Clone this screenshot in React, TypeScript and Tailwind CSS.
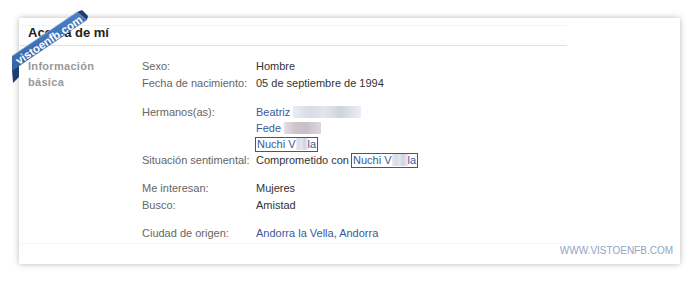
const font = { fontFamily: '"Liberation Sans", Arial, sans-serif' };

function Blur({ w, tone = "gray" }: { w: number; tone?: "gray" | "pink" }) {
  const bg =
    tone === "pink"
      ? "linear-gradient(90deg,#e4e0e6 0%,#cfc4cc 30%,#c9bfc8 60%,#ddd6dc 100%)"
      : "linear-gradient(90deg,#e9ebf1 0%,#d9dce5 25%,#e4e6ed 45%,#d0d4df 70%,#eceef3 100%)";
  return (
    <span
      className="inline-block h-[12px] align-[-2px]"
      style={{ width: w, background: bg }}
    />
  );
}

function Boxed({ children }: { children: React.ReactNode }) {
  return (
    <span className="inline-block -ml-px border border-solid border-[color:#cc1f33] px-px leading-[13px]">
      {children}
    </span>
  );
}

function Row({
  label,
  children,
  lh = "leading-[17px]",
}: {
  label: string;
  children: React.ReactNode;
  lh?: string;
}) {
  return (
    <div className={`flex ${lh}`}>
      <div className="w-[114px] shrink-0 text-[#666]">{label}</div>
      <div className="text-[#333]">{children}</div>
    </div>
  );
}

function Ribbon() {
  return (
    <svg
      className="absolute left-0 top-0 pointer-events-none"
      width="100"
      height="100"
      viewBox="0 0 100 100"
    >
      <defs>
        <linearGradient id="rb" x1="0" y1="0" x2="0.4" y2="1">
          <stop offset="0" stopColor="#5d90d2" />
          <stop offset="1" stopColor="#2b5a9f" />
        </linearGradient>
      </defs>
      {/* folds behind the card */}
      <polygon points="12,70 19,66 19,77 13,83" fill="#1d3d70" />
      <polygon points="77,12 82,10 88,16 87,20" fill="#1d3d70" />
      {/* band */}
      <polygon points="12,56 77,12 87,20 12,71" fill="url(#rb)" />
      <line x1="12" y1="56" x2="77" y2="12" stroke="#9dbde8" strokeWidth="0.8" />
      <text
        x="49"
        y="40"
        fill="#fff"
        fontSize="11.5"
        fontWeight="700"
        textAnchor="middle"
        dominantBaseline="central"
        transform="rotate(-34 49 40)"
        style={font}
      >
        vistoenfb.com
      </text>
    </svg>
  );
}

export default function App() {
  return (
    <div className="relative w-[696px] h-[285px] bg-white text-[11px]" style={font}>
      <div className="absolute left-[19px] top-[18px] w-[661px] h-[246px] bg-white shadow-[0_0_6px_rgba(0,0,0,0.28)]">
        <div className="ml-px mt-[7px] w-[547px] h-[219px] border-t border-[#e9f7fb] border-b border-b-[#f5f8ec]">
          <div className="h-[20px] border-b border-[#e2e2e2] pl-[8px] text-[13px] font-bold leading-[14px] text-[#222]">
            Acerca de mí
          </div>
          <div className="flex pl-[8px] pt-[12px]">
            <div className="w-[114px] shrink-0 font-bold leading-[16px] text-[#999] tracking-[0.3px]">
              Información
              <br />
              básica
            </div>
            <div className="flex flex-col">
              <Row label="Sexo:">Hombre</Row>
              <Row label="Fecha de nacimiento:">05 de septiembre de 1994</Row>
              <div className="h-[12px]" />
              <div className="flex leading-[16px]">
                <div className="w-[114px] shrink-0 text-[#666]">Hermanos(as):</div>
                <div className="flex flex-col text-[#3b5998]">
                  <div>
                    Beatriz <Blur w={68} />
                  </div>
                  <div>
                    Fede <Blur w={37} tone="pink" />
                  </div>
                  <div>
                    <Boxed>
                      Nuchi V<Blur w={12} />
                      la
                    </Boxed>
                  </div>
                </div>
              </div>
              <Row label="Situación sentimental:" lh="leading-[16px]">
                Comprometido con{" "}
                <span className="text-[#3b5998]">
                  <Boxed>
                    Nuchi V<Blur w={16} />
                    la
                  </Boxed>
                </span>
              </Row>
              <div className="h-[12px]" />
              <Row label="Me interesan:">Mujeres</Row>
              <Row label="Busco:">Amistad</Row>
              <div className="h-[11px]" />
              <Row label="Ciudad de origen:">
                <span className="text-[#3b5998]">Andorra la Vella, Andorra</span>
              </Row>
            </div>
          </div>
        </div>
        <div className="flex justify-end pr-[7px] pt-[1px] text-[10px] leading-[12px] text-[#94a3c4]">
          WWW.VISTOENFB.COM
        </div>
      </div>
      <Ribbon />
    </div>
  );
}
